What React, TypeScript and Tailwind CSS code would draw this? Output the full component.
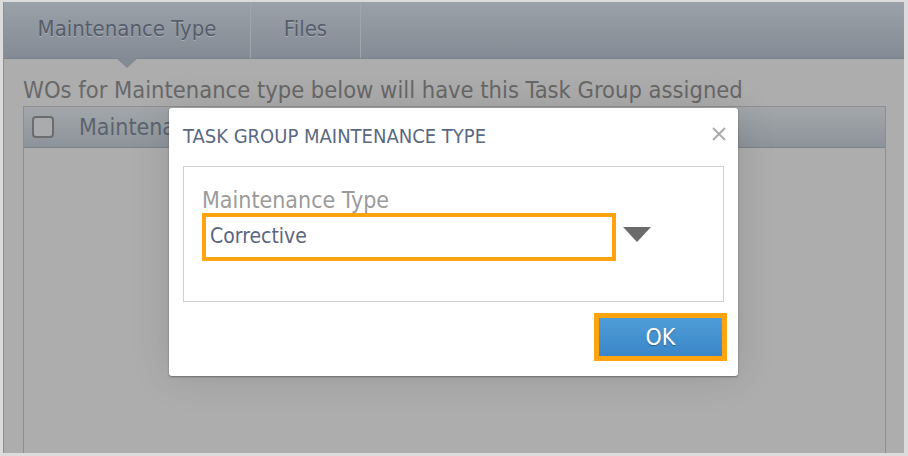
import React from "react";

const font = { fontFamily: '"DejaVu Sans", "Liberation Sans", sans-serif' };

export default function App() {
  return (
    <div
      className="relative w-[908px] h-[456px] overflow-hidden bg-[#dcdcdc] pt-[2px] pl-[3px] pr-[4px] pb-[3px]"
      style={font}
    >
      <div className="flex flex-col h-full bg-[#adadad] border-l border-[#8f8f8f] rounded-tr-[6px]">
        {/* Tab bar */}
        <div className="relative flex h-[57px] bg-gradient-to-b from-[#9ba1a9] to-[#848b94] border-b border-[#7b838c]">
          <div className="relative flex items-center justify-center w-[247px] pb-[4px] border-r border-[#a0a6ad] text-[22px] text-[#565d6b] font-stretch-condensed [text-shadow:0_1px_0_rgba(180,186,194,0.7)]">
            Maintenance Type
            <div className="absolute left-1/2 -translate-x-1/2 top-[56px] w-0 h-0 border-l-[11px] border-r-[11px] border-t-[10px] border-l-transparent border-r-transparent border-t-[#838a93]" />
          </div>
          <div className="flex items-center justify-center w-[110px] pb-[4px] border-r border-[#a0a6ad] text-[22px] text-[#565d6b] font-stretch-condensed [text-shadow:0_1px_0_rgba(180,186,194,0.7)]">
            Files
          </div>
        </div>

        {/* Content */}
        <div className="flex flex-col flex-1 pl-[19px] pr-[18px]">
          <div className="h-[47px] flex items-end pb-[2px] text-[23.5px] leading-[27px] text-[#686868] font-stretch-condensed whitespace-nowrap">
            WOs for Maintenance type below will have this Task Group assigned
          </div>
          <div className="flex flex-col flex-1 border-l border-r border-[#8e8e8e]">
            <div className="flex items-center h-[42px] border-t border-[#8f8f8f] border-b border-b-[#7c838b] bg-gradient-to-b from-[#a3a7ab] to-[#8d939a]">
              <div className="ml-[8px] w-[22px] h-[22px] rounded-[4px] border-2 border-[#6c6c6c] bg-[#a9abad]" />
              <div className="ml-[25px] w-[91px] overflow-hidden text-[23px] text-[#5b636e] font-stretch-condensed whitespace-nowrap">
                Maintenance
              </div>
            </div>
            <div className="flex-1" />
          </div>
        </div>
      </div>

      {/* Modal */}
      <div className="absolute left-[169px] top-[108px] w-[569px] h-[268px] bg-white rounded-[3px] shadow-[0_0_40px_rgba(0,0,0,0.12),0_1px_2px_rgba(0,0,0,0.35)] flex flex-col px-[14px]">
        <div className="flex items-center justify-between h-[58px] pb-[2px]">
          <div className="text-[20px] text-[#5b6883] font-stretch-condensed whitespace-nowrap">
            TASK GROUP MAINTENANCE TYPE
          </div>
          <svg width="14" height="14" viewBox="0 0 14 14" className="mr-[-2px] mb-[4px]">
            <path d="M1 1 L13 13 M13 1 L1 13" stroke="#a9a9a9" strokeWidth="1.8" />
          </svg>
        </div>
        <div className="h-[136px] border border-[#cfcfcf] pt-[20px] pl-[18px]">
          <div className="text-[23px] leading-[26px] text-[#9b9b9b] font-stretch-condensed whitespace-nowrap">
            Maintenance Type
          </div>
          <div className="flex items-center">
            <div className="w-[414px] h-[48px] border-[4px] border-[#ffa40f] bg-white flex items-center pl-[4px] text-[21px] text-[#5b6680] font-stretch-condensed">
              Corrective
            </div>
            <svg width="28" height="15" viewBox="0 0 28 15" className="ml-[7px] mb-[6px]">
              <path d="M0 0 L28 0 L14 15 Z" fill="#6b6b6b" />
            </svg>
          </div>
        </div>
        <div className="flex justify-end pt-[11px]">
          <div className="mr-[-3px] border-[5px] border-[#ffa40f]">
            <div className="w-[123px] h-[38px] bg-gradient-to-b from-[#4f9dd8] to-[#3a86c7] flex items-center justify-center text-white text-[23px] font-stretch-condensed [text-shadow:0_1px_1px_rgba(0,0,0,0.3)]">
              OK
            </div>
          </div>
        </div>
      </div>
    </div>
  );
}
